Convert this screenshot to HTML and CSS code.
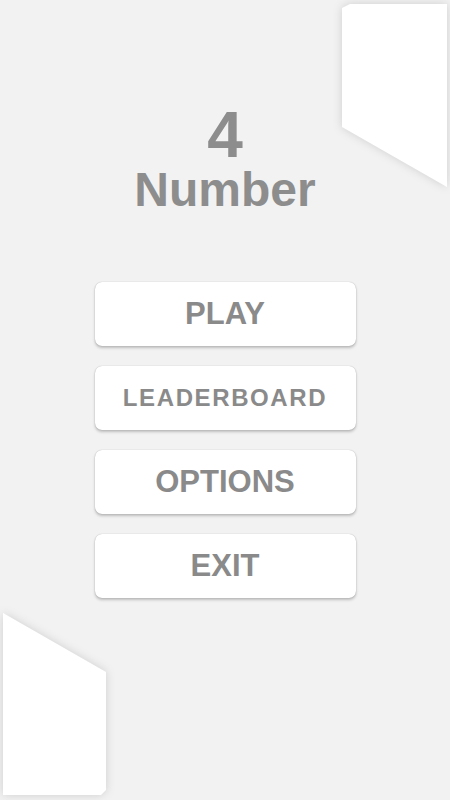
FILE: index.html
```html
<!DOCTYPE html>
<html lang="en">
<head>
  <meta charset="UTF-8">
  <title>4 Number</title>
  <link rel="stylesheet" href="styles.css">
</head>
<body>
  <div class="screen">
    <svg class="deco deco-top" width="120" height="200" viewBox="0 0 120 200">
      <polygon points="12,8 20,4 117,4 117,187 12,127" fill="#fff"/>
    </svg>
    <svg class="deco deco-bottom" width="120" height="200" viewBox="0 0 120 200">
      <polygon points="3,13 106,72 106,190 101,195 3,195" fill="#fff"/>
    </svg>

    <header class="title">
      <div class="title-num">4</div>
      <div class="title-word">Number</div>
    </header>

    <nav class="menu">
      <button class="menu-btn">PLAY</button>
      <button class="menu-btn small">LEADERBOARD</button>
      <button class="menu-btn">OPTIONS</button>
      <button class="menu-btn">EXIT</button>
    </nav>
  </div>
</body>
</html>
```

FILE: styles.css
```css
html, body { margin:0; padding:0; }
body { background:#f2f2f2; font-family:"Liberation Sans", Arial, sans-serif; }

.screen { position:relative; width:450px; height:800px; overflow:hidden; display:flex; flex-direction:column; align-items:center; }

/* paper corners */
.deco { position:absolute; filter:drop-shadow(0 0 5px rgba(0,0,0,.14)); }
.deco-top { left:330px; top:0; }
.deco-bottom { left:0; top:600px; }

.title { position:relative; padding-top:104px; text-align:center; color:#8d8d8d; font-weight:bold; }
.title-num { font-size:64px; line-height:62px; }
.title-word { font-size:48px; line-height:48px; }

.menu { position:relative; margin-top:68px; display:flex; flex-direction:column; gap:20px; }
.menu-btn {
  width:261px; height:64px; border:none; border-radius:7px; background:#fff;
  box-shadow:0 0 1px rgba(0,0,0,.3), 0 2px 3px rgba(0,0,0,.22);
  font-family:inherit; font-weight:bold; font-size:31px; color:#8a8a8a;
  display:flex; align-items:center; justify-content:center; padding:0; cursor:pointer;
}
.menu-btn.small { font-size:24px; letter-spacing:1.6px; }
```
